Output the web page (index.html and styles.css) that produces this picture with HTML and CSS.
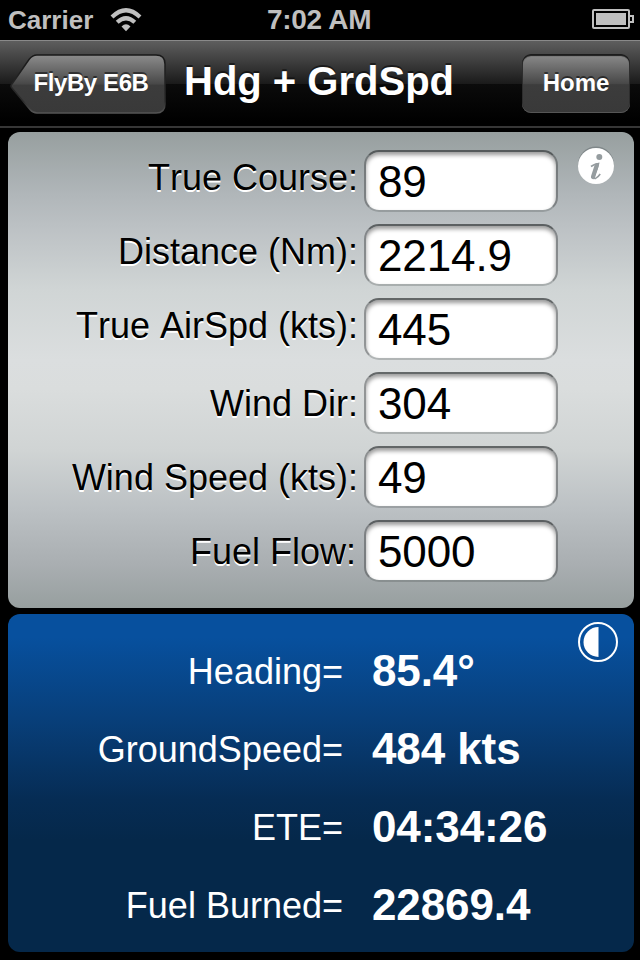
FILE: index.html
```html
<!DOCTYPE html>
<html lang="en">
<head>
  <meta charset="UTF-8">
  <meta name="viewport" content="width=device-width, initial-scale=1.0">
  <title>Hdg + GrdSpd</title>
  <link rel="stylesheet" href="styles.css">
</head>
<body>
  <div class="status-bar">
    <span class="carrier">Carrier</span>
    <svg class="wifi" width="32" height="24" viewBox="0 0 32 24">
      <g fill="none" stroke="#bfbfbf" stroke-width="4.200">
        <path d="M2 9 Q16 -4.400 30 9"/>
        <path d="M7.200 14.300 Q16 6.200 24.800 14.300"/>
      </g>
      <path d="M11.500 18.600 Q16 14 20.500 18.600 L16 23.200 Z" fill="#bfbfbf"/>
    </svg>
    <span class="time">7:02 AM</span>
    <svg class="battery" width="42" height="20" viewBox="0 0 42 20">
      <rect x="1" y="1" width="36" height="18" rx="1" fill="none" stroke="#bfbfbf" stroke-width="2"/>
      <rect x="4" y="4" width="30" height="12" fill="#bfbfbf"/>
      <path d="M38 7 H41 V13 H38" fill="none" stroke="#bfbfbf" stroke-width="2"/>
    </svg>
  </div>

  <header class="nav-bar">
    <button class="back-btn">
      <svg class="back-shape" width="158" height="62" viewBox="0 0 158 62">
        <defs>
          <linearGradient id="backFill" x1="0" y1="0" x2="0" y2="1">
            <stop offset="0" stop-color="#8c8c8c"/>
            <stop offset="0.5" stop-color="#484848"/>
            <stop offset="0.52" stop-color="#3c3c3c"/>
            <stop offset="1" stop-color="#393939"/>
          </linearGradient>
          <linearGradient id="backEdge" x1="0" y1="0" x2="0" y2="1">
            <stop offset="0" stop-color="#181818"/>
            <stop offset="0.8" stop-color="#2c2c2c"/>
            <stop offset="1" stop-color="#565656"/>
          </linearGradient>
        </defs>
        <path d="M28 1 H147 Q156 1 156 10 V50 Q156 59 147 59 H28 Q24 59 21 55.500 L3 34 Q1 32 3 30 L20 5.500 Q23.500 1 28 1 Z" fill="url(#backFill)" stroke="url(#backEdge)" stroke-width="1.500"/>
      </svg>
      <span class="back-text">FlyBy E6B</span>
    </button>
    <h1>Hdg + GrdSpd</h1>
    <button class="home-btn">Home</button>
  </header>

  <form class="inputs">
    <div class="row"><label for="course">True Course:</label><input type="text" id="course" value="89"></div>
    <div class="row"><label for="distance">Distance (Nm):</label><input type="text" id="distance" value="2214.9"></div>
    <div class="row"><label for="airspd">True AirSpd (kts):</label><input type="text" id="airspd" value="445"></div>
    <div class="row low"><label for="winddir">Wind Dir:</label><input type="text" id="winddir" value="304"></div>
    <div class="row low"><label for="windspd">Wind Speed (kts):</label><input type="text" id="windspd" value="49"></div>
    <div class="row low fuel"><label for="fuel">Fuel Flow:</label><input type="text" id="fuel" value="5000"></div>
    <svg class="info" width="38" height="40" viewBox="0 0 38 40">
      <circle cx="19" cy="18.500" r="18" fill="#7f8789"/>
      <circle cx="19" cy="20" r="18" fill="#fff"/>
      <circle cx="22.300" cy="11" r="3" fill="#959c9f"/>
      <path d="M14 20.500 Q17.500 18 21.500 17.500 Q20.300 23 17.600 28.500 Q16.300 33 18.600 32.400 Q21 31.200 23.200 28" fill="none" stroke="#959c9f" stroke-width="1.600"/>
      <path d="M19.800 19.200 L16 31" fill="none" stroke="#959c9f" stroke-width="4.200" stroke-linecap="round"/>
    </svg>
  </form>

  <section class="results">
    <dl>
      <dt>Heading=</dt><dd>85.4°</dd>
      <dt>GroundSpeed=</dt><dd>484 kts</dd>
      <dt>ETE=</dt><dd>04:34:26</dd>
      <dt>Fuel Burned=</dt><dd>22869.4</dd>
    </dl>
    <svg class="contrast" width="40" height="40" viewBox="0 0 40 40">
      <circle cx="20" cy="20" r="19" fill="none" stroke="#fff" stroke-width="2"/>
      <path d="M20.500 5 A15 15 0 0 0 20.500 35 Z" fill="#fff"/>
    </svg>
  </section>
</body>
</html>
```

FILE: styles.css
```css
* {
  box-sizing: border-box;
}

body, h1, dl, dd, form {
  margin: 0;
  padding: 0;
}

body {
  width: 640px;
  height: 960px;
  overflow: hidden;
  background-color: #000;
  font-family: "Liberation Sans", Arial, sans-serif;
}

.status-bar {
  height: 40px;
  display: flex;
  align-items: center;
  padding: 0 6px 0 8px;
  color: #bfbfbf;
  font-weight: bold;
}

.carrier {
  width: 102px;
  font-size: 26px;
}

.time {
  margin-left: 125px;
  font-size: 28px;
  letter-spacing: -0.3px;
}

.battery {
  margin-left: auto;
  margin-top: -2px;
}

.nav-bar {
  height: 88px;
  display: flex;
  align-items: flex-start;
  padding: 13px 10px 0 9px;
  border-top: 1px solid #8a8a8a;
  border-bottom: 2px solid #363636;
  background: linear-gradient(#5e5e5e 0, #1a1a1a 43px, #0b0b0b 43px, #000 80px);
}

.nav-bar h1 {
  margin-left: 17px;
  font-size: 40px;
  line-height: 54px;
  color: #fff;
  white-space: nowrap;
  text-shadow: 0 -2px 0 rgba(0, 0, 0, 0.5);
}

.nav-bar button {
  border: none;
  padding: 0;
  font-family: inherit;
  font-size: 24px;
  font-weight: bold;
  line-height: 57px;
  color: #fff;
  text-shadow: 0 -2px 0 rgba(0, 0, 0, 0.5);
}

.nav-bar .back-btn {
  position: relative;
  width: 158px;
  height: 62px;
  padding-bottom: 5px;
  background: none;
}

.back-shape {
  position: absolute;
  left: 0;
  top: 0;
}

.back-text {
  position: relative;
  display: block;
  padding-left: 6px;
  letter-spacing: -0.4px;
  white-space: nowrap;
}

.nav-bar .home-btn {
  width: 108px;
  height: 59px;
  margin-left: auto;
  padding-bottom: 2px;
  border-radius: 9px;
  background: linear-gradient(#8c8c8c, #484848 50%, #3c3c3c 52%, #393939);
  box-shadow: inset 0 2px 1px #1c1c1c, inset 0 -1px 0 #565656, inset 0 0 0 1px #303030;
}

.inputs {
  position: relative;
  width: 626px;
  height: 476px;
  margin: 4px 0 0 8px;
  padding-top: 18px;
  border-radius: 12px;
  background: linear-gradient(#979f9f, #b0b6b9 13%, #bcc1c4 20%, #d0d5d5 33%, #dbdedf 48%, #dadddd 54%, #d0d4d4 67%, #bcc1c4 79%, #a9aeb1 91%, #979f9f);
}

.row {
  display: flex;
  align-items: flex-start;
  height: 74px;
}

.row label {
  width: 352px;
  padding-right: 2px;
  text-align: right;
  font-size: 36px;
  font-kerning: none;
  line-height: 56px;
  color: #000;
  white-space: nowrap;
  text-shadow: 0 2px 0 #fff;
}

.row.low label {
  padding-top: 4px;
}

.row.fuel label {
  padding-right: 4px;
}

.row input {
  width: 194px;
  height: 62px;
  margin-left: 4px;
  padding: 1px 0 0 12px;
  border: 2px solid rgba(60, 64, 66, 0.45);
  border-top-color: rgba(60, 64, 66, 0.75);
  border-bottom-color: rgba(80, 86, 88, 0.3);
  border-radius: 15px;
  background: #fff;
  background-clip: padding-box;
  box-shadow: inset 0 3px 4px rgba(0, 0, 0, 0.4);
  font-family: inherit;
  font-size: 44px;
  letter-spacing: -0.1px;
  color: #000;
}

.info {
  position: absolute;
  left: 569px;
  top: 14px;
}

.results {
  position: relative;
  width: 626px;
  height: 338px;
  margin: 6px 0 0 8px;
  padding-top: 18px;
  border-radius: 12px;
  background: linear-gradient(#07509e, #07509e 7%, #083f7a 31%, #062c54 55%, #05284a 67%, #05284a);
  color: #fff;
}

.results dl {
  display: grid;
  grid-template-columns: 335px 1fr;
  grid-auto-rows: 78px;
  column-gap: 29px;
}

.results dt {
  text-align: right;
  font-size: 36px;
  line-height: 80px;
}

.results dd {
  font-size: 44px;
  font-weight: bold;
  letter-spacing: -0.1px;
  line-height: 78px;
}

.contrast {
  position: absolute;
  left: 570px;
  top: 8px;
}
```
